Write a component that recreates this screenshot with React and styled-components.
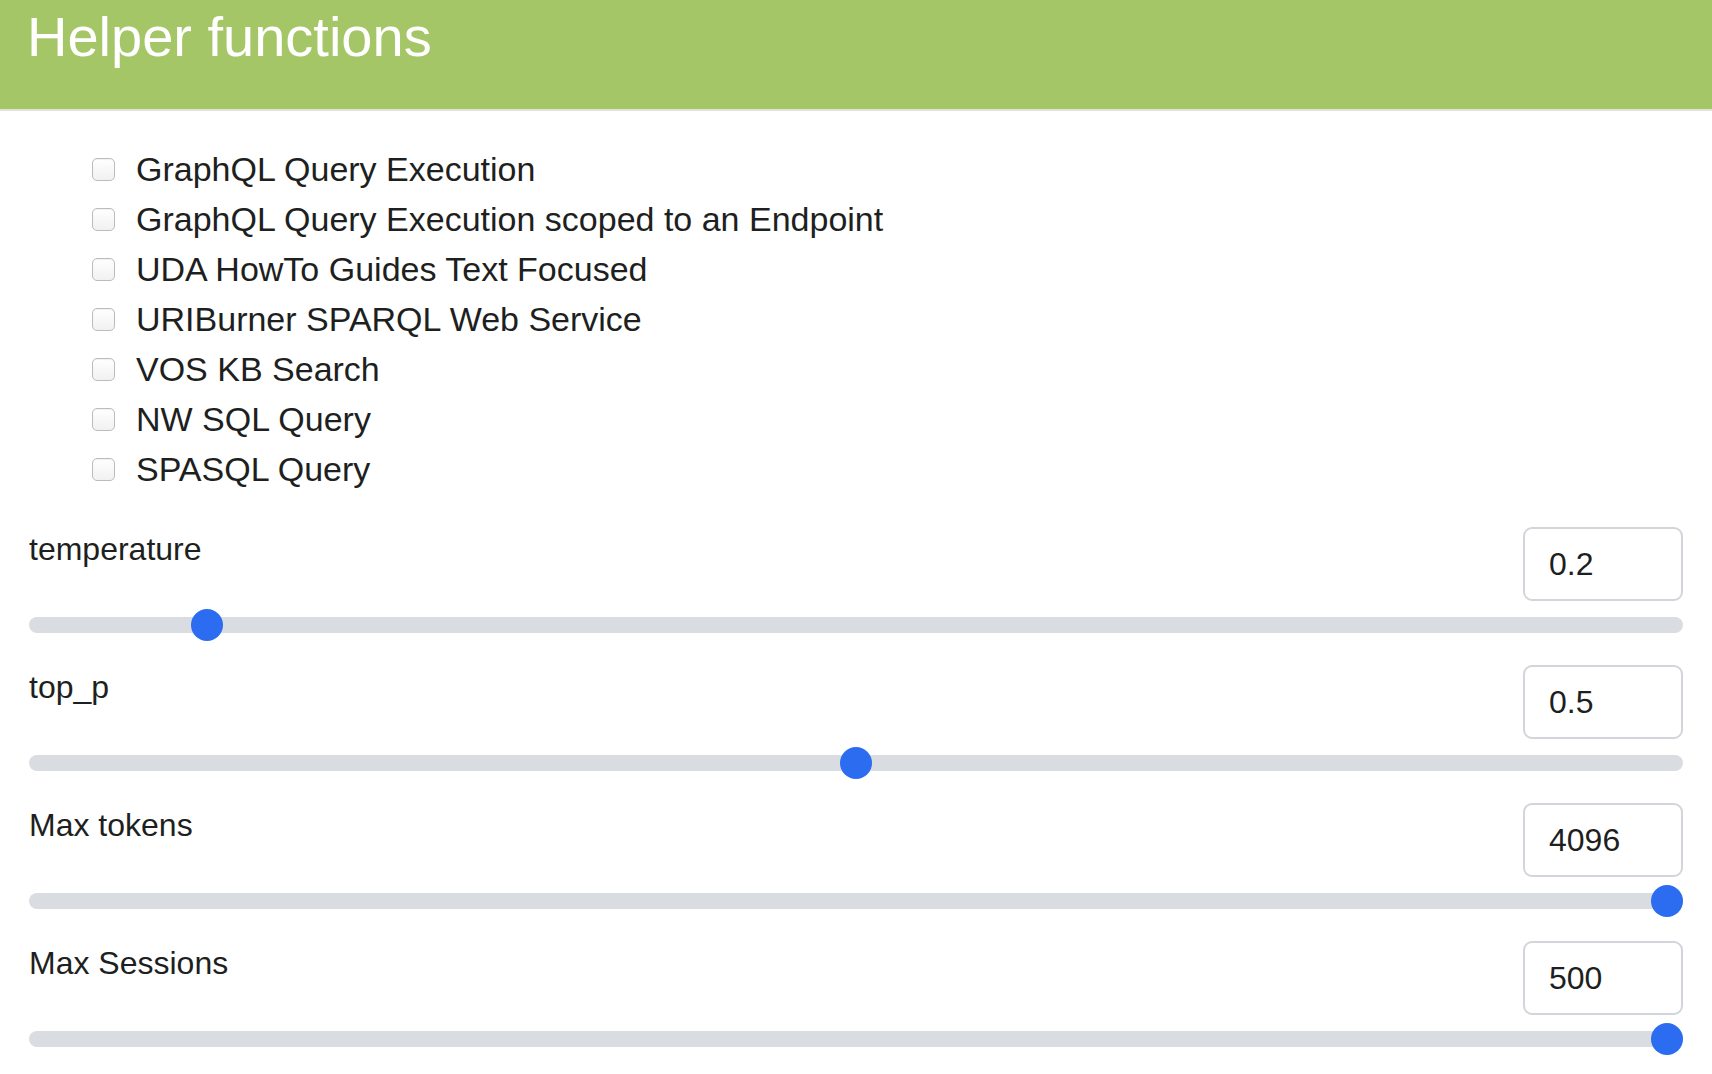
import React from "react";
import styled, { createGlobalStyle } from "styled-components";

const GlobalStyle = createGlobalStyle`
  html, body {
    margin: 0;
    padding: 0;
    background: #ffffff;
  }
  body {
    font-family: "Liberation Sans", Arial, Helvetica, sans-serif;
    color: #1e1f21;
  }
  * { box-sizing: border-box; }
`;

const Page = styled.div`
  width: 1712px;
  min-height: 1074px;
  background: #fff;
`;

const Header = styled.header`
  height: 111px;
  padding: 7px 27px 0;
  background: #a4c667;
  border-bottom: 2px solid #dfe3da;
`;

const Title = styled.h1`
  margin: 0;
  font-size: 56px;
  line-height: 60px;
  font-weight: 400;
  color: #ffffff;
`;

const Body = styled.main`
  padding: 0 29px;
`;

const FunctionList = styled.ul`
  list-style: none;
  margin: 33px 0 0;
  padding: 0 0 0 63px;
`;

const FunctionItem = styled.li`
  display: flex;
  align-items: center;
  gap: 21px;
  height: 50px;
  line-height: 50px;
  font-size: 34px;
  color: #1e1f21;
`;

const Check = styled.input.attrs({ type: "checkbox" })`
  appearance: none;
  -webkit-appearance: none;
  width: 23px;
  height: 23px;
  margin: 0;
  flex: none;
  border: 1px solid #bcbcbc;
  border-radius: 5px;
  background: linear-gradient(#ffffff, #f1f1f1);
  box-shadow: inset 0 1px 1px rgba(0, 0, 0, 0.06);
`;

const Params = styled.section`
  margin-top: 33px;
  display: flex;
  flex-direction: column;
  gap: 24px;
`;

const Param = styled.div`
  display: flex;
  flex-direction: column;
`;

const ParamHead = styled.div`
  display: flex;
  justify-content: space-between;
  align-items: flex-start;
  height: 74px;
`;

const ParamLabel = styled.label`
  padding-top: 4px;
  font-size: 32px;
  line-height: 36px;
  color: #1e1f21;
`;

const ValueBox = styled.input`
  width: 160px;
  height: 74px;
  margin: 0;
  padding: 0 10px 0 24px;
  border: 2px solid #d2d5da;
  border-radius: 9px;
  background: #fff;
  font-family: "Liberation Sans", Arial, Helvetica, sans-serif;
  font-size: 32px;
  color: #1e1f21;
  outline: none;
`;

const Slider = styled.input.attrs({ type: "range" })`
  -webkit-appearance: none;
  appearance: none;
  display: block;
  width: 100%;
  height: 32px;
  margin: 8px 0 0;
  padding: 0;
  background: transparent;
  outline: none;

  &::-webkit-slider-runnable-track {
    height: 16px;
    border-radius: 8px;
    background: #d9dce1;
  }
  &::-webkit-slider-thumb {
    -webkit-appearance: none;
    appearance: none;
    width: 32px;
    height: 32px;
    margin-top: -8px;
    border: none;
    border-radius: 50%;
    background: #2b6cf0;
  }
  &::-moz-range-track {
    height: 16px;
    border-radius: 8px;
    background: #d9dce1;
  }
  &::-moz-range-thumb {
    width: 32px;
    height: 32px;
    border: none;
    border-radius: 50%;
    background: #2b6cf0;
  }
`;

const functions = [
  "GraphQL Query Execution",
  "GraphQL Query Execution scoped to an Endpoint",
  "UDA HowTo Guides Text Focused",
  "URIBurner SPARQL Web Service",
  "VOS KB Search",
  "NW SQL Query",
  "SPASQL Query",
];

const params = [
  { id: "temperature", label: "temperature", value: "0.2", min: 0, max: 2, step: 0.1 },
  { id: "top_p", label: "top_p", value: "0.5", min: 0, max: 1, step: 0.1 },
  { id: "max_tokens", label: "Max tokens", value: "4096", min: 0, max: 4096, step: 1 },
  { id: "max_sessions", label: "Max Sessions", value: "500", min: 0, max: 500, step: 1 },
];

export default function App() {
  return (
    <Page>
      <GlobalStyle />
      <Header>
        <Title>Helper functions</Title>
      </Header>
      <Body>
        <FunctionList>
          {functions.map((f) => (
            <FunctionItem key={f}>
              <Check aria-label={f} />
              <span>{f}</span>
            </FunctionItem>
          ))}
        </FunctionList>
        <Params>
          {params.map((p) => (
            <Param key={p.id}>
              <ParamHead>
                <ParamLabel htmlFor={p.id}>{p.label}</ParamLabel>
                <ValueBox id={p.id} defaultValue={p.value} />
              </ParamHead>
              <Slider
                aria-label={p.label}
                min={p.min}
                max={p.max}
                step={p.step}
                defaultValue={p.value}
              />
            </Param>
          ))}
        </Params>
      </Body>
    </Page>
  );
}
